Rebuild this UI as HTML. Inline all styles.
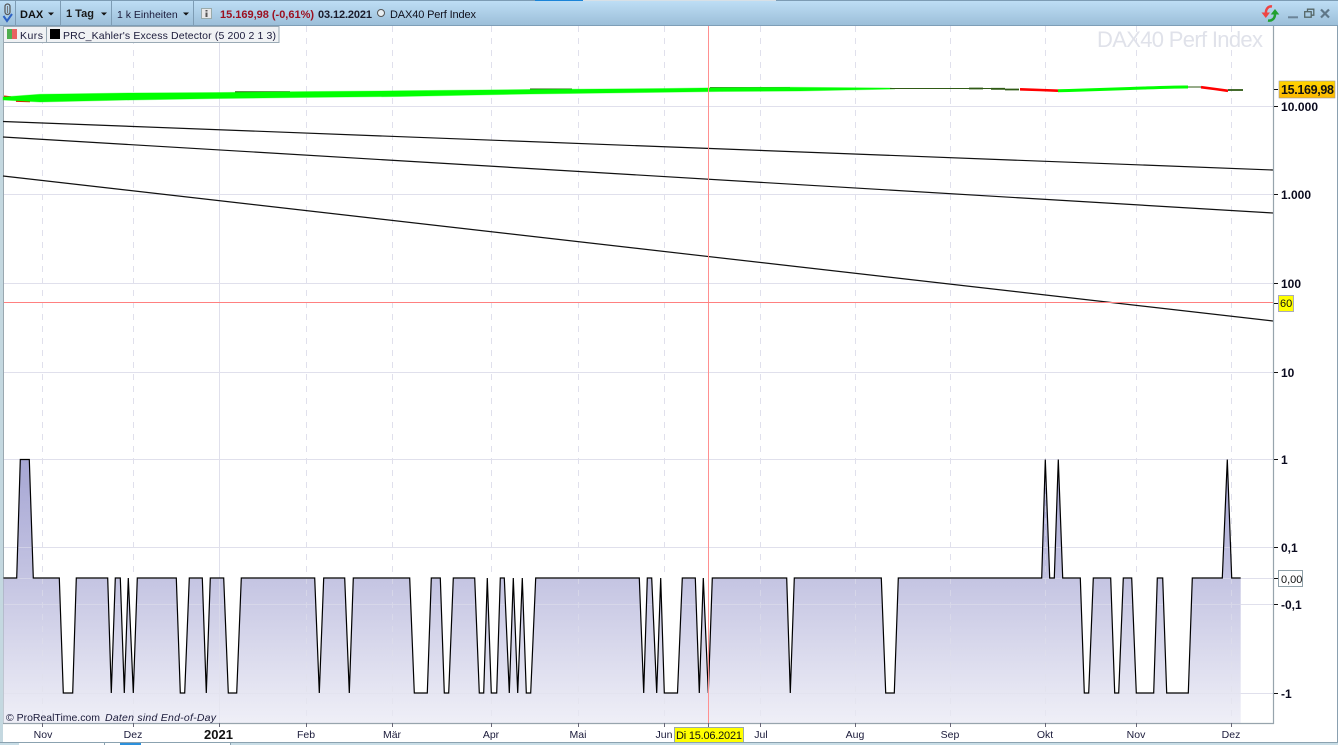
<!DOCTYPE html>
<html><head><meta charset="utf-8"><style>
html,body{margin:0;padding:0;background:#fff}
body{width:1338px;height:745px;overflow:hidden;position:relative}
svg{position:absolute;left:0;top:0}
text{font-family:"Liberation Sans",sans-serif;font-size:11px;fill:#111}
.ax{font-size:12px;font-weight:bold;fill:#0a0a1e}
.mo{font-size:10.5px;text-anchor:middle;fill:#1a1a3a}
</style></head><body>
<svg width="1338" height="745" viewBox="0 0 1338 745">
<defs>
<linearGradient id="tb" x1="0" y1="0" x2="0" y2="1"><stop offset="0" stop-color="#bfdff6"/><stop offset="1" stop-color="#9cbfd9"/></linearGradient>
<linearGradient id="fg" gradientUnits="userSpaceOnUse" x1="0" y1="459" x2="0" y2="723"><stop offset="0" stop-color="#a6a6d4"/><stop offset="0.45" stop-color="#c4c4e2"/><stop offset="1" stop-color="#efeff7"/></linearGradient>
<linearGradient id="gold" x1="0" y1="0" x2="0" y2="1"><stop offset="0" stop-color="#ffd400"/><stop offset="1" stop-color="#fdb900"/></linearGradient>
<clipPath id="fc"><polygon points="3.5,723 3.5,578 16.7,578 20.3,459.5 29.3,459.5 33.3,578 59.3,578 63.3,693 72.7,693 76.3,578 107.7,578 111.3,693 115.3,578 120.3,578 124.3,693 128.3,578 133.3,693 137.3,578 176.3,578 180.3,693 184.7,693 189.3,578 202.3,578 206.3,693 210.3,578 223.7,578 228.3,693 236.7,693 241.3,578 314.7,578 319.3,693 323.7,578 344.7,578 349.3,693 353.3,578 409.7,578 414.3,693 427.3,693 431.3,578 440.3,578 444.3,693 448.7,693 453.3,578 474.7,578 479.3,693 483.7,693 487.3,578 491.3,693 496.7,693 500.3,578 504.3,578 509.3,693 513.3,578 517.7,693 522.3,578 526.3,693 530.7,693 535.7,578 639.3,578 643.7,693 647.3,578 651.7,578 656.7,693 660.7,578 664.3,693 677.5,693 682.3,578 695.3,578 699.3,693 703.3,578 708.3,693 712.3,578 786.7,578 790.3,693 794.3,578 881.3,578 885.7,693 894.3,693 898.3,578 1041.7,578 1045.3,459.5 1049.7,578 1054.3,578 1058.3,459.5 1062.7,578 1080.3,578 1084.3,693 1088.7,693 1093.3,578 1110.7,578 1114.7,693 1118.7,693 1123.3,578 1131.7,578 1136.3,693 1153.7,693 1157.3,578 1162.7,578 1166.7,693 1188.3,693 1192.3,578 1222.3,578 1227.3,459.5 1231.7,578 1240.7,578 1240.7,723"/></clipPath>
<g id="grid">
<g stroke="#e0e0ec" stroke-width="1" fill="none">
<path d="M4 106.5H1273M4 194.5H1273M4 283.5H1273M4 372.5H1273M4 459.5H1273M4 547.5H1273M4 578.5H1273M4 604.5H1273M4 693.5H1273"/>
<path d="M219.5 26V723"/>
<g stroke-dasharray="6 6"><path d="M42.5 26V723M133.5 26V723M306.5 26V723M392.5 26V723M491.5 26V723M578.5 26V723M664.5 26V723M760.5 26V723M855.5 26V723M950.5 26V723M1045.5 26V723M1136.5 26V723M1231.5 26V723"/></g>
</g>
</g>
</defs>

<rect x="0" y="0" width="1338" height="745" fill="#fff"/>
<rect x="0" y="0" width="3" height="745" fill="#c4d8e0"/>
<rect x="3" y="26" width="1" height="697" fill="#9aa8b0"/>
<rect x="1337" y="0" width="1" height="745" fill="#8aa0b0"/>

<!-- toolbar -->
<rect x="0" y="0" width="1338" height="25" fill="url(#tb)"/>
<rect x="0" y="0" width="1338" height="1" fill="#7d9cb4"/>
<rect x="535" y="0" width="48" height="1" fill="#1a84d8"/>
<rect x="583" y="0" width="193" height="1" fill="#d8e0e6"/>
<rect x="0" y="25" width="1338" height="1" fill="#7e9eb7"/>
<path d="M15.5 1V25M60.5 1V25M111.5 1V25M193.5 1V25" stroke="#7d9cb4" fill="none"/>
<!-- pin -->
<g fill="none">
<path d="M5 6.500a2.500 2.500 0 0 1 5 0V12a2.500 2.500 0 0 1-5 0Z" stroke="#555" stroke-width="1.200"/>
<path d="M7.500 6V13" stroke="#777" stroke-width="1"/>
<path d="M3.500 16L7 21L12 14" stroke="#2d62c4" stroke-width="2"/>
</g>
<text x="20" y="18" style="font-weight:bold;font-size:11px">DAX</text>
<path d="M48 12.500h6l-3 3z" fill="#111"/>
<text x="66" y="17" style="font-weight:bold;font-size:11px;fill:#1a1a1a">1 Tag</text>
<path d="M101 12.500h6l-3 3z" fill="#111"/>
<text x="117" y="18" style="font-size:10.500px;fill:#1a1a3a">1 k Einheiten</text>
<path d="M183 12.500h6l-3 3z" fill="#111"/>
<rect x="201.500" y="8.500" width="10" height="10" fill="#e8e8e8" stroke="#9aa"/>
<path d="M205.500 10h2v1.500h-2zM205.500 12.500h2V17h-2z" fill="#555"/>
<text x="220" y="18" style="font-size:11px;font-weight:bold;fill:#9c1020" textLength="94">15.169,98 (-0,61%)</text>
<text x="318" y="18" style="font-size:11px;font-weight:bold;fill:#1a1a2a" textLength="54">03.12.2021</text>
<circle cx="381" cy="13" r="3.500" fill="#e8eef2" stroke="#555"/>
<text x="390" y="18" style="font-size:11px;fill:#10101c" textLength="86">DAX40 Perf Index</text>

<!-- window icons -->
<g fill="none">
<path d="M1272 6.500C1268.500 6 1266 8.500 1265.800 13" stroke="#ee4444" stroke-width="2.500"/>
<path d="M1261.500 12.500h8.500l-4.200 5.500z" fill="#ee4444"/>
<path d="M1268 20.500C1272 21.200 1275 18.500 1275 14" stroke="#22a030" stroke-width="2.500"/>
<path d="M1270.700 14.500h8.600l-4.300-5.500z" fill="#22a030"/>
<path d="M1288 17.300h10" stroke="#6b8498" stroke-width="2"/>
<rect x="1304.700" y="11.700" width="6.500" height="5.500" stroke="#566" stroke-width="1.300"/>
<path d="M1307.500 11.500V9.200h6.300v6h-2.500" stroke="#566" stroke-width="1.300"/>
<path d="M1321 9.500l8 8M1329 9.500l-8 8" stroke="#5f7788" stroke-width="2.200"/>
</g>

<!-- grid -->
<use href="#grid"/>
<rect x="4" y="578" width="1236.700" height="115.500" fill="#fff"/>

<!-- oscillator -->
<rect x="3" y="459" width="1238" height="264" fill="url(#fg)" clip-path="url(#fc)"/>
<g clip-path="url(#fc)" opacity=".55"><use href="#grid"/></g>
<polyline fill="none" stroke="#000" stroke-width="1.200" points="3.500,578 16.700,578 20.300,459.500 29.300,459.500 33.300,578 59.300,578 63.300,693 72.700,693 76.300,578 107.700,578 111.300,693 115.300,578 120.300,578 124.300,693 128.300,578 133.300,693 137.300,578 176.300,578 180.300,693 184.700,693 189.300,578 202.300,578 206.300,693 210.300,578 223.700,578 228.300,693 236.700,693 241.300,578 314.700,578 319.300,693 323.700,578 344.700,578 349.300,693 353.300,578 409.700,578 414.300,693 427.300,693 431.300,578 440.300,578 444.300,693 448.700,693 453.300,578 474.700,578 479.300,693 483.700,693 487.300,578 491.300,693 496.700,693 500.300,578 504.300,578 509.300,693 513.300,578 517.700,693 522.300,578 526.300,693 530.700,693 535.700,578 639.300,578 643.700,693 647.300,578 651.700,578 656.700,693 660.700,578 664.300,693 677.500,693 682.300,578 695.300,578 699.300,693 703.300,578 708.300,693 712.300,578 786.700,578 790.300,693 794.300,578 881.300,578 885.700,693 894.300,693 898.300,578 1041.700,578 1045.300,459.500 1049.700,578 1054.300,578 1058.300,459.500 1062.700,578 1080.300,578 1084.300,693 1088.700,693 1093.300,578 1110.700,578 1114.700,693 1118.700,693 1123.300,578 1131.700,578 1136.300,693 1153.700,693 1157.300,578 1162.700,578 1166.700,693 1188.300,693 1192.300,578 1222.300,578 1227.300,459.500 1231.700,578 1240.700,578"/>

<!-- watermark -->
<text x="1097" y="47" style="font-size:22px;fill:#e0e2ea" textLength="166">DAX40 Perf Index</text>

<!-- long lines -->
<g fill="none" stroke="#111" stroke-width="1.200">
<path d="M3 121.500L1273 170"/>
<path d="M3 137L1273 213"/>
<path d="M3 176L1273 321"/>
</g>

<!-- price -->
<path d="M4 96.500L11 97.200" stroke="#f00" stroke-width="2"/>
<path d="M16 100.800L30 101.200" stroke="#f00" stroke-width="2.200"/>
<path d="M235 92H290M530 89.200H572M710 87.800H790" stroke="#2f5a14" stroke-width="1.400" fill="none"/>
<polygon points="3,97 40,94.300 60,94 130,93 220,92.500 300,91.600 400,90.800 530,89.500 665,88.500 720,87.800 790,87.200 890,88 895,89 800,91 720,91.500 665,92.300 530,94 400,96.500 300,97.500 220,98.500 130,100 40,102 3,100" fill="#00ff00" stroke="#00ff00" stroke-width="1" stroke-opacity=".35"/>
<path d="M890 88.500H1000" stroke="#2f5a14" stroke-width="1"/>
<path d="M969 88.500h14M991 88.800h14M1005 89.500h14" stroke="#2f5a14" stroke-width="1.800" fill="none"/>
<path d="M1020 89.300L1040 90L1058 90.700" stroke="#ff0000" stroke-width="2.600" fill="none"/>
<path d="M1058 90.800C1080 90.300 1100 89.500 1130 88.500S1175 86.800 1188 87" stroke="#00ff00" stroke-width="3" fill="none"/>
<path d="M1188 87H1201" stroke="#2f5a14" stroke-width="1"/>
<path d="M1201 87.200L1215 89L1228 90.800" stroke="#ff0000" stroke-width="2.600" fill="none"/>
<path d="M1228 90H1243" stroke="#2f5a14" stroke-width="1.800"/>

<!-- crosshair -->
<path d="M708.500 26V723" stroke="#ff9090" stroke-width="1"/>
<path d="M4 302.500H1273" stroke="#ff8080" stroke-width="1"/>

<!-- legend -->
<rect x="3.500" y="26.500" width="43" height="16" fill="#f0f2f4" stroke="#9aaab5"/>
<rect x="7" y="29" width="5" height="10" fill="#4fae50"/>
<rect x="12" y="29" width="5" height="10" fill="#e86060"/>
<text x="20" y="39" style="font-size:10.500px;fill:#1a1a3a" textLength="23">Kurs</text>
<rect x="46.500" y="26.500" width="232.500" height="16" fill="#f0f2f4" stroke="#9aaab5"/>
<rect x="50" y="29" width="10" height="10" fill="#000"/>
<text x="63" y="39" style="font-size:10.500px;fill:#1a1a3a" textLength="213">PRC_Kahler's Excess Detector (5 200 2 1 3)</text>

<!-- axes -->
<path d="M1273.500 26V723.500H3" stroke="#97a4ad" stroke-width="1.200" fill="none"/>
<g stroke="#111" stroke-width="1" fill="none">
<path d="M1274 89.500h4M1274 106.500h4M1274 194.500h4M1274 283.500h4M1274 303.500h4M1274 372.500h4M1274 459.500h4M1274 547.500h4M1274 578.500h4M1274 604.500h4M1274 693.500h4"/>
<path d="M42.500 723v4M133.500 723v4M219.500 723v4M306.500 723v4M392.500 723v4M491.500 723v4M578.500 723v4M664.500 723v4M708.500 723v4M760.500 723v4M855.500 723v4M950.500 723v4M1045.500 723v4M1136.500 723v4M1231.500 723v4" stroke="#667"/>
</g>
<rect x="1279" y="81" width="56" height="17" fill="url(#gold)" stroke="#99a" stroke-width=".6"/>
<text x="1281" y="94" style="font-size:12.500px;font-weight:bold" textLength="53">15.169,98</text>
<text x="1281" y="111" class="ax" textLength="37">10.000</text>
<text x="1281" y="199" class="ax" textLength="30">1.000</text>
<text x="1281" y="288" class="ax">100</text>
<rect x="1278.500" y="295.500" width="15" height="16" fill="#ffff00" stroke="#aab" stroke-width="1"/>
<text x="1280" y="307" style="font-size:11px">60</text>
<text x="1281" y="377" class="ax">10</text>
<text x="1281" y="464" class="ax">1</text>
<text x="1281" y="552" class="ax">0,1</text>
<rect x="1278.500" y="570.500" width="24" height="16" fill="#fff" stroke="#8fa0a8" stroke-width="1"/>
<text x="1281" y="583" style="font-size:11px">0,00</text>
<text x="1281" y="609" class="ax">-0,1</text>
<text x="1281" y="698" class="ax">-1</text>

<!-- copyright -->
<text x="6" y="721" style="font-size:10.500px;fill:#1a1a3a" textLength="94">© ProRealTime.com</text>
<text x="105" y="721" style="font-size:10.500px;font-style:italic;fill:#1a1a3a" textLength="111">Daten sind End-of-Day</text>

<!-- months -->
<text x="43" y="738" class="mo">Nov</text>
<text x="133" y="738" class="mo">Dez</text>
<text x="218.500" y="739" style="font-size:13px;font-weight:bold;text-anchor:middle">2021</text>
<text x="306" y="738" class="mo">Feb</text>
<text x="392" y="738" class="mo">Mär</text>
<text x="491" y="738" class="mo">Apr</text>
<text x="578" y="738" class="mo">Mai</text>
<text x="664" y="738" class="mo">Jun</text>
<rect x="674.500" y="727.500" width="69" height="15" fill="#ffff00" stroke="#9aa" stroke-width="1"/>
<text x="676" y="739" style="font-size:11px" textLength="66">Di 15.06.2021</text>
<text x="761" y="738" class="mo">Jul</text>
<text x="855" y="738" class="mo">Aug</text>
<text x="950" y="738" class="mo">Sep</text>
<text x="1045" y="738" class="mo">Okt</text>
<text x="1136" y="738" class="mo">Nov</text>
<text x="1231" y="738" class="mo">Dez</text>

<!-- bottom strip -->
<rect x="0" y="742" width="1338" height="3" fill="#c8dde6"/>
<rect x="0" y="742" width="1338" height="1" fill="#8ba2b0"/>
<rect x="19" y="743" width="211" height="2" fill="#fff"/>
<rect x="120" y="743" width="21" height="2" fill="#2c90dc"/>
<path d="M104.500 743v2M230.500 743v2" stroke="#8ba2b0"/>
</svg>
</body></html>
